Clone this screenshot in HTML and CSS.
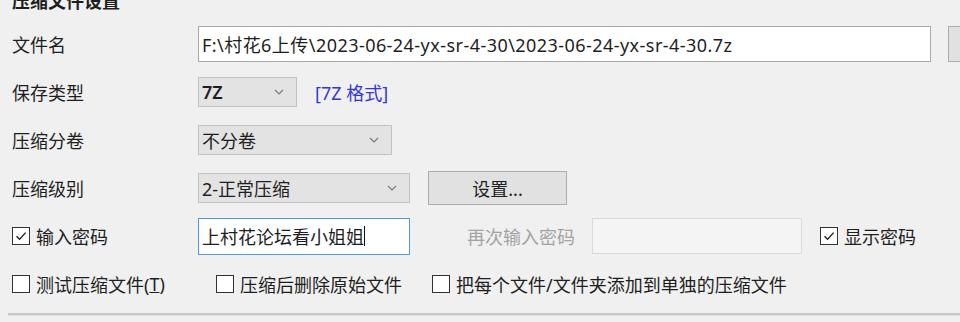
FILE: index.html
```html
<!DOCTYPE html>
<html>
<head>
    <link rel="stylesheet" href="styles.css">
</head>
<body>

    <div class="panel">
        <div class="title">压缩文件设置</div>

        <div class="rows">
            <div class="row">
                <div class="label">文件名</div>
                <div class="field field-path">F:\村花6上传\2023-06-24-yx-sr-4-30\2023-06-24-yx-sr-4-30.7z</div>
                <div class="btn btn-browse"></div>
            </div>

            <div class="row">
                <div class="label">保存类型</div>
                <div class="select select-type">
                    <span class="bold">7Z</span>
                    <svg class="chev" width="10" height="6" viewBox="0 0 10 6"><path d="M1 1 L5 5 L9 1" fill="none" stroke="#7a7a7a" stroke-width="1.2"/></svg>
                </div>
                <div class="format-link">[7Z 格式]</div>
            </div>

            <div class="row">
                <div class="label">压缩分卷</div>
                <div class="select select-split">
                    <span>不分卷</span>
                    <svg class="chev" width="10" height="6" viewBox="0 0 10 6"><path d="M1 1 L5 5 L9 1" fill="none" stroke="#7a7a7a" stroke-width="1.2"/></svg>
                </div>
            </div>

            <div class="row">
                <div class="label">压缩级别</div>
                <div class="select select-level">
                    <span>2-正常压缩</span>
                    <svg class="chev" width="10" height="6" viewBox="0 0 10 6"><path d="M1 1 L5 5 L9 1" fill="none" stroke="#7a7a7a" stroke-width="1.2"/></svg>
                </div>
                <div class="btn btn-settings">设置...</div>
            </div>

            <div class="row">
                <label class="check check-pass">
                    <span class="box checked"><svg width="14" height="14" viewBox="0 0 14 14"><path d="M2.5 7.2 L5.6 10.2 L11.6 3.6" fill="none" stroke="#222" stroke-width="1.4"/></svg></span>
                    输入密码
                </label>
                <div class="field field-pass">上村花论坛看小姐姐<span class="caret"></span></div>
                <div class="label-muted">再次输入密码</div>
                <div class="field field-disabled"></div>
                <label class="check check-show">
                    <span class="box checked"><svg width="14" height="14" viewBox="0 0 14 14"><path d="M2.5 7.2 L5.6 10.2 L11.6 3.6" fill="none" stroke="#222" stroke-width="1.4"/></svg></span>
                    显示密码
                </label>
            </div>

            <div class="row">
                <label class="check opt-test"><span class="box"></span>测试压缩文件(<u>T</u>)</label>
                <label class="check opt-delete"><span class="box"></span>压缩后删除原始文件</label>
                <label class="check"><span class="box"></span>把每个文件/文件夹添加到单独的压缩文件</label>
            </div>
        </div>

        <div class="divider"></div>
    </div>

</body>
</html>
```

FILE: styles.css
```css
body {
    margin: 0;
    width: 960px;
    height: 322px;
    overflow: hidden;
    background-color: #f0f0f0;
    font-family: 'Noto Sans', 'Noto Sans CJK SC', sans-serif;
    font-size: 18px;
    color: #1e1e1e;
}
.panel {
    padding: 0 0 0 12px;
}
.title {
    margin-top: -9px;
    height: 20px;
    line-height: 20px;
    font-weight: bold;
}
.rows {
    margin-top: 9px;
}
.row {
    display: flex;
    align-items: center;
    height: 48px;
    white-space: nowrap;
}
.row > * {
    flex-shrink: 0;
}
.label {
    width: 186px;
}
.field {
    box-sizing: border-box;
    background-color: #fff;
    border: 1px solid #a9a9a9;
    padding: 0 3px;
    display: flex;
    align-items: center;
}
.field-path {
    width: 733px;
    height: 36px;
    letter-spacing: 0.45px;
}
.btn {
    box-sizing: border-box;
    background-color: #e1e1e1;
    border: 1px solid #adadad;
    display: flex;
    align-items: center;
    justify-content: center;
}
.btn-browse {
    margin-left: 17px;
    width: 60px;
    height: 36px;
}
.select {
    box-sizing: border-box;
    height: 30px;
    background-color: #e3e3e3;
    border: 1px solid #c2c2c2;
    display: flex;
    align-items: center;
    justify-content: space-between;
    padding: 0 12px 0 3px;
}
.bold {
    font-weight: 600;
}
.chev {
    display: block;
}
.select-type {
    width: 99px;
}
.select-split {
    width: 194px;
}
.select-level {
    width: 212px;
}
.format-link {
    margin-left: 18px;
    color: #3535d8;
}
.btn-settings {
    margin-left: 18px;
    width: 139px;
    height: 34px;
}
.check {
    display: flex;
    align-items: center;
}
.box {
    box-sizing: border-box;
    width: 18px;
    height: 18px;
    border: 1px solid #333;
    background-color: #fff;
    margin-right: 6px;
    display: flex;
    align-items: center;
    justify-content: center;
}
.check-pass {
    width: 186px;
}
.field-pass {
    width: 212px;
    height: 37px;
    border-color: #4f9be0;
}
.caret {
    display: inline-block;
    width: 1px;
    height: 20px;
    background-color: #111;
}
.label-muted {
    margin-left: 57px;
    width: 125px;
    color: #a3a3a3;
}
.field-disabled {
    width: 210px;
    height: 36px;
    background-color: #f4f4f4;
    border-color: #d9d9d9;
}
.check-show {
    margin-left: 18px;
}
.opt-test {
    width: 204px;
}
.opt-delete {
    width: 216px;
}
.divider {
    margin-top: 5px;
    margin-left: -4px;
    height: 2px;
    background-color: #c9c9c9;
    border-bottom: 1px solid #dedede;
}
```
